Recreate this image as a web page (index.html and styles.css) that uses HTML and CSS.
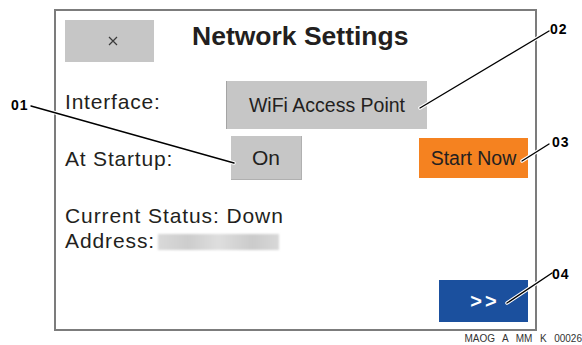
FILE: index.html
```html
<!DOCTYPE html>
<html>
<head>
	<meta charset="utf-8">
	<meta name="viewport" content="width=device-width, initial-scale=1">
	<title>Network Settings</title>
	<link rel="stylesheet" href="styles.css">
</head>
<body>
	<div class="page">
		<div class="screen">
			<div class="screen_head">
				<div class="btn btn_close">
					<svg width="10" height="10" viewBox="0 0 10 10">
						<path d="M1 1 L9 9 M9 1 L1 9" stroke="#3a3a3a" stroke-width="1.2" fill="none"/>
					</svg>
				</div>
				<h2 class="title">Network Settings</h2>
			</div>

			<div class="row row_interface">
				<div class="label">Interface:</div>
				<div class="btn btn_wifi">WiFi Access Point</div>
			</div>

			<div class="row row_startup">
				<div class="label">At Startup:</div>
				<div class="btn btn_on">On</div>
				<div class="btn btn_start">Start Now</div>
			</div>

			<div class="status">
				<div>Current Status: Down</div>
				<div>Address:<span class="blur"></span></div>
			</div>

			<div class="btn btn_next">&gt;&gt;</div>
		</div>
		<div class="code">MAOG  A  MM  K  00026</div>
	</div>

	<!-- callouts -->
	<svg class="callouts" width="582" height="345" viewBox="0 0 582 345">
		<g stroke="#fff" stroke-width="3.5" stroke-linecap="round">
			<line x1="31" y1="106" x2="234" y2="163"/>
			<line x1="549" y1="31" x2="420" y2="108"/>
			<line x1="549" y1="144" x2="522" y2="161"/>
			<line x1="552" y1="273" x2="507" y2="303"/>
		</g>
		<g stroke="#000" stroke-width="1.4" stroke-linecap="round">
			<line x1="31" y1="106" x2="234" y2="163"/>
			<line x1="549" y1="31" x2="420" y2="108"/>
			<line x1="549" y1="144" x2="522" y2="161"/>
			<line x1="552" y1="273" x2="507" y2="303"/>
		</g>
		<g class="callout_num">
			<text x="11" y="110">01</text>
			<text x="550" y="34">02</text>
			<text x="552" y="147">03</text>
			<text x="552" y="279">04</text>
		</g>
	</svg>
</body>
</html>
```

FILE: styles.css
```css
body {
	margin: 0;
	background-color: #fff;
	font-family: "Liberation Sans", Arial, sans-serif;
	color: #231f20;
}

.page {
	padding: 9px 0 0 54px;
	width: 528px;
}

.screen {
	box-sizing: border-box;
	width: 483px;
	height: 322px;
	border: 2px solid #7c7c7c;
	padding: 9px 7px 7px 9px;
	display: flex;
	flex-direction: column;
}

.screen_head {
	display: flex;
	align-items: flex-start;
}

.btn {
	box-sizing: border-box;
	display: flex;
	align-items: center;
	justify-content: center;
	background-color: #c6c6c6;
	font-size: 19.5px;
}

.btn_close {
	width: 89px;
	height: 42px;
	padding-left: 6px;
}

.title {
	margin: 1px 0 0 38px;
	font-size: 26.5px;
	line-height: 30px;
	font-weight: 700;
}

.row {
	display: flex;
	align-items: flex-start;
}

.label {
	font-size: 21px;
	line-height: 25px;
	letter-spacing: 0.8px;
}

.row_interface {
	margin-top: 19px;
}

.row_interface .label {
	width: 161px;
	margin-top: 8px;
}

.btn_wifi {
	width: 201px;
	height: 48px;
	border-left: 1px solid #a4a4a4;
}

.row_startup {
	margin-top: 7px;
}

.row_startup .label {
	width: 166px;
	margin-top: 10px;
}

.btn_on {
	width: 71px;
	height: 44px;
	font-size: 21px;
	border-right: 1px solid #b0b0b0;
	border-bottom: 1px solid #b0b0b0;
}

.btn_start {
	margin: 2px 0 0 auto;
	width: 109px;
	height: 40px;
	background-color: #f58220;
}

.status {
	margin-top: 23px;
	font-size: 21px;
	line-height: 25px;
	letter-spacing: 0.9px;
}

.blur {
	display: inline-block;
	width: 121px;
	height: 16px;
	margin-left: 3px;
	vertical-align: -2px;
	background: linear-gradient(to right, #d9d9d9 0%, #cdcdcd 25%, #dedede 50%, #cbcbcb 78%, #d8d8d8 100%);
	filter: blur(1px);
}

.btn_next {
	margin-top: auto;
	align-self: flex-end;
	width: 89px;
	height: 42px;
	background-color: #1b509e;
	color: #fff;
	font-size: 20px;
	font-weight: 700;
	letter-spacing: 3px;
	padding-left: 3px;
}

.code {
	margin-top: 2px;
	text-align: right;
	font-size: 10px;
	line-height: 12px;
	color: #333;
	white-space: pre;
	word-spacing: 1px;
}

.callouts {
	position: absolute;
	left: 0;
	top: 0;
}

.callout_num text {
	font-family: "Liberation Sans", Arial, sans-serif;
	font-size: 14px;
	font-weight: 700;
	letter-spacing: 1px;
	fill: #000;
}
```
